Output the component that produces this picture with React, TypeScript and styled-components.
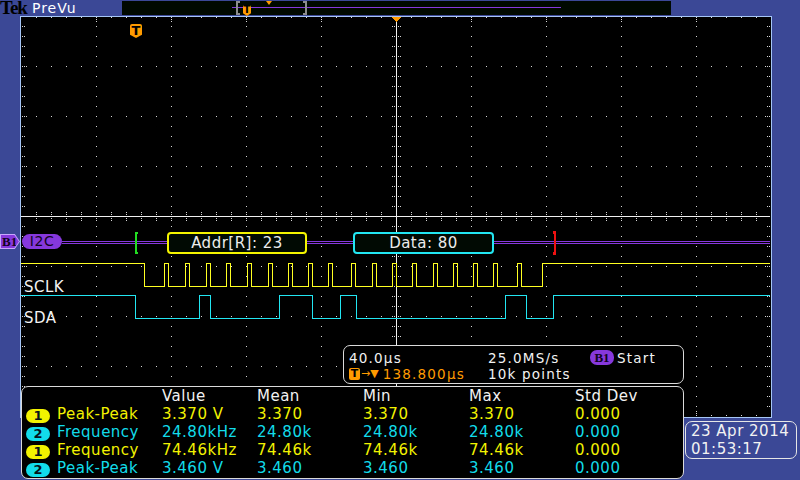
import React from 'react';
import styled, { createGlobalStyle } from 'styled-components';

const BLUE = '#3b4896';
const YELLOW = '#f2f200';
const CYAN = '#12dcea';
const ORANGE = '#ff9b00';
const PURPLE = '#8638dc';
const WHITE = '#f2f2f2';

const GlobalStyle = createGlobalStyle`
  html, body { margin: 0; padding: 0; background: ${BLUE}; }
  body { width: 800px; height: 480px; overflow: hidden; }
`;

// graticule dots, in page coordinates (svg viewBox starts at 20,16)
const GRID_PATH = (() => {
  const d: string[] = [];
  const dot = (x: number, y: number) => d.push(`M${x} ${y}h1v1h-1z`);
  const vMajor = [96, 171, 246, 321, 471, 546, 621, 696];
  const hMajor = [66, 116, 166, 266, 316, 366];
  for (const x of vMajor) for (let y = 26; y <= 406; y += 10) dot(x, y);
  for (const y of hMajor) for (let x = 36; x <= 756; x += 15) dot(x, y);
  for (let x = 36; x <= 756; x += 15) {
    dot(x, 17);
    dot(x, 415);
    dot(x, 212);
    dot(x, 214);
    dot(x, 218);
    dot(x, 220);
  }
  for (const x of [...vMajor, 396]) {
    dot(x, 19);
    dot(x, 21);
    dot(x, 411);
    dot(x, 413);
  }
  for (let y = 26; y <= 406; y += 10) {
    dot(22, y);
    dot(24, y);
    dot(767, y);
    dot(769, y);
    dot(392, y);
    dot(394, y);
    dot(398, y);
    dot(400, y);
  }
  for (const y of [...hMajor, 216]) {
    dot(26, y);
    dot(765, y);
  }
  return d.join('');
})();

const SCLK_RISES = [164, 185, 206, 226, 247, 268, 288, 308, 328, 351, 372, 392, 412, 433, 453, 473, 493, 517];

const sclkPath = (() => {
  const hi = 263.5;
  const lo = 286.5;
  let d = `M21 ${hi} H144.5 V${lo}`;
  for (const r of SCLK_RISES) d += ` H${r + 0.5} V${hi} H${r + 4.5} V${lo}`;
  d += ` H542.5 V${hi} H770`;
  return d;
})();

const SDA_EDGES = [135, 199, 210, 279, 312, 340, 356, 505, 526, 553];

const sdaPath = (() => {
  const hi = 295.5;
  const lo = 318.5;
  let d = `M21 ${hi}`;
  SDA_EDGES.forEach((x, i) => {
    d += ` H${x + 0.5} V${i % 2 === 0 ? lo : hi}`;
  });
  return d + ' H770';
})();

const measurements = [
  { ch: 1, name: 'Peak-Peak', value: '3.370 V', mean: '3.370', min: '3.370', max: '3.370', sd: '0.000' },
  { ch: 2, name: 'Frequency', value: '24.80kHz', mean: '24.80k', min: '24.80k', max: '24.80k', sd: '0.000' },
  { ch: 1, name: 'Frequency', value: '74.46kHz', mean: '74.46k', min: '74.46k', max: '74.46k', sd: '0.000' },
  { ch: 2, name: 'Peak-Peak', value: '3.460 V', mean: '3.460', min: '3.460', max: '3.460', sd: '0.000' },
];

const Screen = styled.div`
  width: 800px;
  height: 480px;
  background: ${BLUE};
  display: flex;
  flex-direction: column;
  font-family: 'DejaVu Sans', sans-serif;
  color: ${WHITE};
`;

const TopBar = styled.header`
  flex: none;
  height: 16px;
  display: flex;
  align-items: flex-start;
`;

const Brand = styled.div`
  width: 122px;
  display: flex;
`;

const TekLogo = styled.span`
  font-family: 'Liberation Serif', serif;
  font-weight: bold;
  font-size: 19px;
  line-height: 16px;
  letter-spacing: -1px;
  color: #000;
`;

const PreVu = styled.span`
  margin-left: 5px;
  font-size: 14px;
  line-height: 16px;
  letter-spacing: 1px;
  color: #fff;
`;

const RecordView = styled.div`
  position: relative;
  width: 549px;
  height: 14px;
  margin-top: 1px;
  background: #000900;
`;

const RecordSpan = styled.div`
  position: absolute;
  left: 110px;
  top: 6px;
  width: 329px;
  height: 1px;
  background: ${PURPLE};
`;

const ViewBracket = styled.div<{ $side: 'left' | 'right' }>`
  position: absolute;
  top: 0;
  width: 2px;
  height: 10px;
  border: 2px solid #8c8c8c;
  ${(p) => (p.$side === 'left' ? 'border-right: none; left: 114px;' : 'border-left: none; left: 181px;')}
`;

const TriggerFlag = styled.span<{ $w: number; $h: number }>`
  display: flex;
  justify-content: center;
  width: ${(p) => p.$w}px;
  height: ${(p) => p.$h}px;
  background: ${ORANGE};
  clip-path: polygon(0 0, 100% 0, 100% 76%, 50% 100%, 0 76%);
  border-radius: 2px 2px 0 0;
  color: #000;
  font-weight: bold;
  font-size: ${(p) => p.$h - 1}px;
  line-height: ${(p) => p.$h - 1}px;
`;

const RecordTrigger = styled(TriggerFlag)`
  position: absolute;
  left: 121px;
  top: 4px;
`;

const RecordMarker = styled.div`
  position: absolute;
  left: 144px;
  top: 0;
  width: 0;
  height: 0;
  border-left: 3px solid transparent;
  border-right: 3px solid transparent;
  border-top: 4px solid ${ORANGE};
`;

const MainRow = styled.div`
  flex: none;
  height: 402px;
  display: flex;
`;

const LeftRail = styled.div`
  position: relative;
  width: 20px;
  flex: none;
`;

const BusBadge = styled.div`
  position: absolute;
  left: 0;
  top: 218px;
  width: 20px;
  height: 15px;
  background: #c8a6ff;
  clip-path: polygon(0 0, 74% 0, 100% 50%, 74% 100%, 0 100%);
`;

const BusBadgeInner = styled.div`
  position: absolute;
  inset: 1px;
  background: ${PURPLE};
  clip-path: polygon(0 0, 74% 0, 100% 50%, 74% 100%, 0 100%);
  display: flex;
  align-items: center;
  padding-left: 1px;
  font-family: 'Liberation Serif', serif;
  font-weight: bold;
  font-size: 13px;
  color: #12031f;
`;

const Display = styled.div`
  position: relative;
  flex: none;
  width: 752px;
  height: 402px;
  background: #000;
`;

const Scope = styled.svg`
  position: absolute;
  inset: 0;
  display: block;
`;

const ScreenTrigger = styled(TriggerFlag)`
  position: absolute;
  left: 110px;
  top: 8px;
`;

const BusPill = styled.div`
  position: absolute;
  left: 2px;
  top: 218px;
  width: 40px;
  height: 15px;
  border-radius: 8px;
  background: ${PURPLE};
  color: #12031f;
  font-size: 14px;
  line-height: 15px;
  text-align: center;
  letter-spacing: 0.5px;
`;

const TraceLabel = styled.div<{ $top: number }>`
  position: absolute;
  left: 4px;
  top: ${(p) => p.$top}px;
  font-size: 15px;
  line-height: 18px;
  letter-spacing: 0.5px;
  color: ${WHITE};
`;

const Packet = styled.div<{ $left: number; $width: number; $color: string }>`
  position: absolute;
  left: ${(p) => p.$left}px;
  top: 216px;
  box-sizing: border-box;
  width: ${(p) => p.$width}px;
  height: 22px;
  border: 2px solid ${(p) => p.$color};
  border-radius: 4px;
  background: #010a03;
  color: #ececec;
  font-size: 15px;
  line-height: 18px;
  letter-spacing: 0.5px;
  text-align: center;
`;

const Readouts = styled.div`
  position: absolute;
  left: 1px;
  top: 329px;
  width: 663px;
  display: flex;
  flex-direction: column;
  align-items: flex-end;
  gap: 2px;
`;

const Panel = styled.div`
  box-sizing: border-box;
  background: #000;
  border: 1px solid #dadada;
  border-radius: 7px;
  font-size: 15px;
  letter-spacing: 0.5px;
  white-space: nowrap;
`;

const TimebaseBox = styled(Panel)`
  width: 341px;
  height: 39px;
  padding: 4px 0 0 5px;
  display: grid;
  grid-template-columns: 139px 102px 1fr;
  grid-auto-rows: 16px;
  font-size: 13.5px;
  line-height: 16px;
  letter-spacing: 1.2px;
`;

const TbCell = styled.div<{ $color?: string }>`
  display: flex;
  align-items: center;
  color: ${(p) => p.$color ?? WHITE};
`;

const SourcePill = styled.span`
  width: 24px;
  height: 15px;
  margin-top: -2px;
  margin-right: 3px;
  border-radius: 7px;
  background: ${PURPLE};
  color: #12031f;
  font-family: 'Liberation Serif', serif;
  font-weight: bold;
  font-size: 13px;
  line-height: 15px;
  text-align: center;
  letter-spacing: 0;
`;

const TIcon = styled.span`
  width: 11px;
  height: 12px;
  border-radius: 2px;
  background: ${ORANGE};
  color: #000;
  font-weight: bold;
  font-size: 11px;
  line-height: 12px;
  text-align: center;
  letter-spacing: 0;
`;

const DelayArrow = styled.span`
  font-size: 11px;
  margin: 0 4px 0 1px;
  letter-spacing: 0;
`;

const MeasBox = styled(Panel)`
  width: 663px;
  height: 93px;
  padding-left: 4px;
  display: grid;
  grid-template-columns: 31px 105px 95px 106px 106px 106px 1fr;
  grid-auto-rows: 18px;
  line-height: 18px;
`;

const HeadCell = styled.div<{ $col?: number }>`
  color: ${WHITE};
  ${(p) => (p.$col ? `grid-column: ${p.$col};` : '')}
`;

const Cell = styled.div<{ $color: string }>`
  color: ${(p) => p.$color};
`;

const ChBadge = styled.span<{ $color: string }>`
  align-self: end;
  width: 24px;
  height: 14px;
  border-radius: 7px;
  background: ${(p) => p.$color};
  color: #06121a;
  font-weight: bold;
  font-size: 13px;
  line-height: 14px;
  text-align: center;
  letter-spacing: 0;
`;

const RightRail = styled.div`
  flex: 1;
`;

const BottomRow = styled.div`
  flex: 1;
  display: flex;
  justify-content: flex-end;
  align-items: flex-start;
`;

const DateBox = styled(Panel)`
  width: 112px;
  height: 38px;
  margin: 3px 3px 0 0;
  padding-left: 5px;
  line-height: 18px;
  background: transparent;
  border-color: #e6e6e6;
`;

const chColor = (ch: number) => (ch === 1 ? YELLOW : CYAN);

const App: React.FC = () => {
  return (
    <>
      <GlobalStyle />
      <Screen>
        <TopBar>
          <Brand>
            <TekLogo>Tek</TekLogo>
            <PreVu>PreVu</PreVu>
          </Brand>
          <RecordView>
            <RecordSpan />
            <ViewBracket $side="left" />
            <ViewBracket $side="right" />
            <RecordTrigger $w={8} $h={11}>T</RecordTrigger>
            <RecordMarker />
          </RecordView>
        </TopBar>

        <MainRow>
          <LeftRail>
            <BusBadge>
              <BusBadgeInner>B1</BusBadgeInner>
            </BusBadge>
          </LeftRail>

          <Display>
            <Scope width={752} height={402} viewBox="20 16 752 402" shapeRendering="crispEdges">
              <rect x={20.5} y={16.5} width={751} height={401} fill="none" stroke="#a6c6f6" />
              <path d={GRID_PATH} fill="#d6d6d6" />
              <line x1={396.5} y1={17} x2={396.5} y2={417} stroke="#f0f0f0" />
              <line x1={21} y1={216.5} x2={770} y2={216.5} stroke="#f0f0f0" />
              <polygon points="391,17 402,17 396.5,22" fill={ORANGE} />

              <line x1={62} y1={241.5} x2={770} y2={241.5} stroke={PURPLE} />
              <line x1={62} y1={243.5} x2={770} y2={243.5} stroke={PURPLE} />
              <rect x={135} y={232} width={2} height={22} fill="#22dd22" />
              <rect x={137} y={232} width={1} height={2} fill="#22dd22" />
              <rect x={137} y={252} width={1} height={2} fill="#22dd22" />
              <rect x={554} y={232} width={2} height={22} fill="#ee1111" />
              <rect x={553} y={231} width={3} height={3} fill="#ee1111" />
              <rect x={553} y={252} width={3} height={3} fill="#ee1111" />

              <path d={sclkPath} fill="none" stroke="#ffff22" />
              <path d={sdaPath} fill="none" stroke="#22e6f2" />
            </Scope>

            <ScreenTrigger $w={12} $h={14}>T</ScreenTrigger>
            <BusPill>I2C</BusPill>
            <Packet $left={147} $width={140} $color="#f4f400">Addr[R]: 23</Packet>
            <Packet $left={333} $width={141} $color="#22e6f2">Data: 80</Packet>
            <TraceLabel $top={262}>SCLK</TraceLabel>
            <TraceLabel $top={293}>SDA</TraceLabel>

            <Readouts>
              <TimebaseBox>
                <TbCell>40.0µs</TbCell>
                <TbCell>25.0MS/s</TbCell>
                <TbCell>
                  <SourcePill>B1</SourcePill>
                  Start
                </TbCell>
                <TbCell $color={ORANGE}>
                  <TIcon>T</TIcon>
                  <DelayArrow>→▼</DelayArrow>
                  138.800µs
                </TbCell>
                <TbCell>10k points</TbCell>
              </TimebaseBox>

              <MeasBox>
                <HeadCell $col={3}>Value</HeadCell>
                <HeadCell>Mean</HeadCell>
                <HeadCell>Min</HeadCell>
                <HeadCell>Max</HeadCell>
                <HeadCell>Std Dev</HeadCell>
                {measurements.map((m, i) => (
                  <React.Fragment key={i}>
                    <ChBadge $color={chColor(m.ch)}>{m.ch}</ChBadge>
                    <Cell $color={chColor(m.ch)}>{m.name}</Cell>
                    <Cell $color={chColor(m.ch)}>{m.value}</Cell>
                    <Cell $color={chColor(m.ch)}>{m.mean}</Cell>
                    <Cell $color={chColor(m.ch)}>{m.min}</Cell>
                    <Cell $color={chColor(m.ch)}>{m.max}</Cell>
                    <Cell $color={chColor(m.ch)}>{m.sd}</Cell>
                  </React.Fragment>
                ))}
              </MeasBox>
            </Readouts>
          </Display>

          <RightRail />
        </MainRow>

        <BottomRow>
          <DateBox>
            <div>23 Apr 2014</div>
            <div>01:53:17</div>
          </DateBox>
        </BottomRow>
      </Screen>
    </>
  );
};

export default App;
